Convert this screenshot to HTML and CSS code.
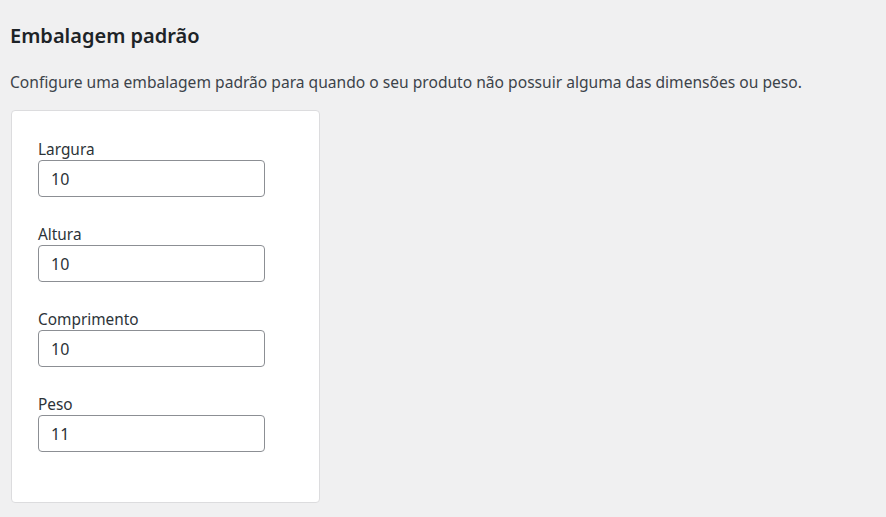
FILE: index.html
```html
<!DOCTYPE html>
<html lang="pt-BR">
<head>
<meta charset="utf-8">
<title>Embalagem padrão</title>
<link rel="stylesheet" href="styles.css">
</head>
<body>
<main class="page">
  <h2 class="title">Embalagem padrão</h2>
  <p class="desc">Configure uma embalagem padrão para quando o seu produto não possuir alguma das dimensões ou peso.</p>
  <section class="card">
    <div class="field">
      <label class="label" for="largura">Largura</label>
      <input class="input" id="largura" type="text" value="10">
    </div>
    <div class="field">
      <label class="label" for="altura">Altura</label>
      <input class="input" id="altura" type="text" value="10">
    </div>
    <div class="field">
      <label class="label" for="comprimento">Comprimento</label>
      <input class="input" id="comprimento" type="text" value="10">
    </div>
    <div class="field">
      <label class="label" for="peso">Peso</label>
      <input class="input" id="peso" type="text" value="11">
    </div>
  </section>
</main>
</body>
</html>
```

FILE: styles.css
```css
html, body {
  margin: 0;
  padding: 0;
  background: #f0f0f1;
}

body {
  font-family: "Noto Sans", "Open Sans", "DejaVu Sans", sans-serif;
  color: #3c434a;
}

.page {
  padding: 22px 0 0 10px;
}

.title {
  margin: 0;
  font-size: 20px;
  line-height: 28px;
  font-weight: 600;
  color: #1d2327;
}

.desc {
  margin: 22px 0 0 0;
  font-size: 15.6px;
  line-height: 20px;
  color: #3c434a;
}

.card {
  margin: 18px 0 0 1px;
  width: 307px;
  box-sizing: content-box;
  background: #ffffff;
  border: 1px solid #dcdcde;
  border-radius: 4px;
  display: flex;
  flex-direction: column;
  gap: 27px;
  padding-top: 28px;
  height: 363px;
}

.field {
  display: flex;
  flex-direction: column;
  padding-left: 26px;
}

.label {
  font-size: 15.4px;
  line-height: 21px;
  color: #2c3338;
}

.input {
  width: 227px;
  height: 37px;
  box-sizing: border-box;
  border: 1px solid #8c8f94;
  border-radius: 4px;
  background: #fff;
  padding: 0 12px;
  font-family: inherit;
  font-size: 16px;
  color: #2c3338;
  outline: none;
}
```
